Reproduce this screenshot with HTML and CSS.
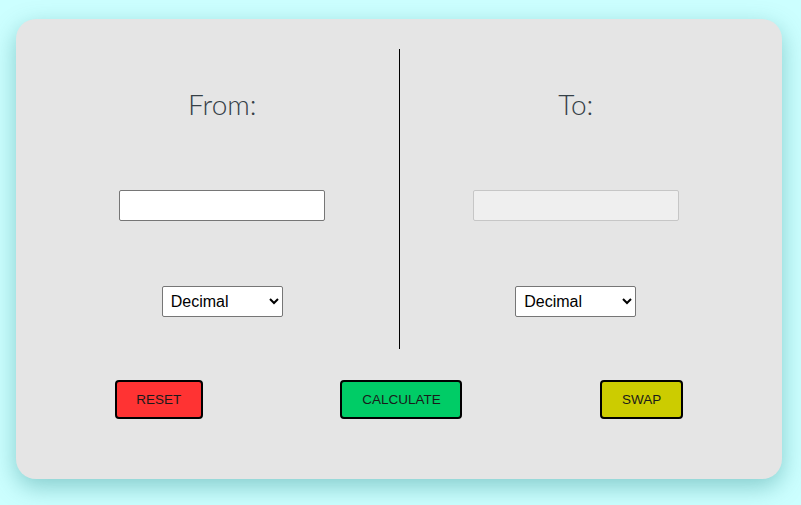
FILE: index.html
```html
<!DOCTYPE html>
<html>
<head>
<meta charset="utf-8">
<link rel="stylesheet" href="styles.css">
</head>
<body>
<div class="card">
  <div class="panels">
    <div class="col">
      <h2 class="title">From:</h2>
      <input class="field" type="text">
      <select class="sel"><option>Decimal</option><option>Binary</option><option>Octal</option><option>Hexadecimal</option></select>
    </div>
    <div class="divider"></div>
    <div class="col">
      <h2 class="title">To:</h2>
      <input class="field" type="text" disabled>
      <select class="sel"><option>Decimal</option><option>Binary</option><option>Octal</option><option>Hexadecimal</option></select>
    </div>
  </div>
  <div class="actions">
    <button class="btn reset">RESET</button>
    <button class="btn calc">CALCULATE</button>
    <button class="btn swap">SWAP</button>
  </div>
</div>
</body>
</html>
```
FILE: styles.css
```css
html, body {
  margin: 0;
  padding: 0;
}
body {
  background: #ccffff;
  padding: 19px 0 0 16px;
  font-family: "Liberation Sans", Arial, sans-serif;
  height: 505px;
  box-sizing: border-box;
  overflow: hidden;
}
.card {
  width: 766px;
  height: 460px;
  box-sizing: border-box;
  background: #e5e5e5;
  border-radius: 20px;
  box-shadow: 0 8px 24px rgba(0, 110, 110, 0.35);
  padding: 30px 30px 0 30px;
}
.panels {
  display: flex;
  height: 300px;
}
.col {
  flex: 1;
  display: flex;
  flex-direction: column;
  align-items: center;
}
.divider {
  width: 1px;
  background: #000;
}
.title {
  margin: 35px 0 0 0;
  font-family: Lato, "Open Sans", sans-serif;
  font-weight: 300;
  font-size: 28px;
  line-height: 40px;
  color: #354047;
}
.field {
  margin-top: 66px;
  width: 206px;
  height: 31px;
  box-sizing: border-box;
  border: 1px solid #767676;
  border-radius: 2px;
  background: #fff;
  padding: 1px 2px;
  font-size: 14px;
}
.field:disabled {
  background: #efefef;
  border-color: #c6c6c6;
}
.sel {
  margin-top: 65px;
  width: 121px;
  height: 31px;
  box-sizing: border-box;
  border: 1px solid #767676;
  border-radius: 2px;
  background: #fff;
  font-family: "Liberation Sans", Arial, sans-serif;
  font-size: 16px;
  color: #000;
  padding: 0 4px;
}
.actions {
  display: flex;
  justify-content: space-around;
  margin-top: 31px;
}
.btn {
  height: 39px;
  box-sizing: border-box;
  border: 2px solid #000;
  border-radius: 4px;
  font-family: "Liberation Sans", Arial, sans-serif;
  font-size: 13.5px;
  color: #1a1a1a;
  padding: 0;
}
.reset { width: 88px; background: #ff3333; }
.calc { width: 122px; background: #00cc66; }
.swap { width: 83px; background: #cccc00; }
```
